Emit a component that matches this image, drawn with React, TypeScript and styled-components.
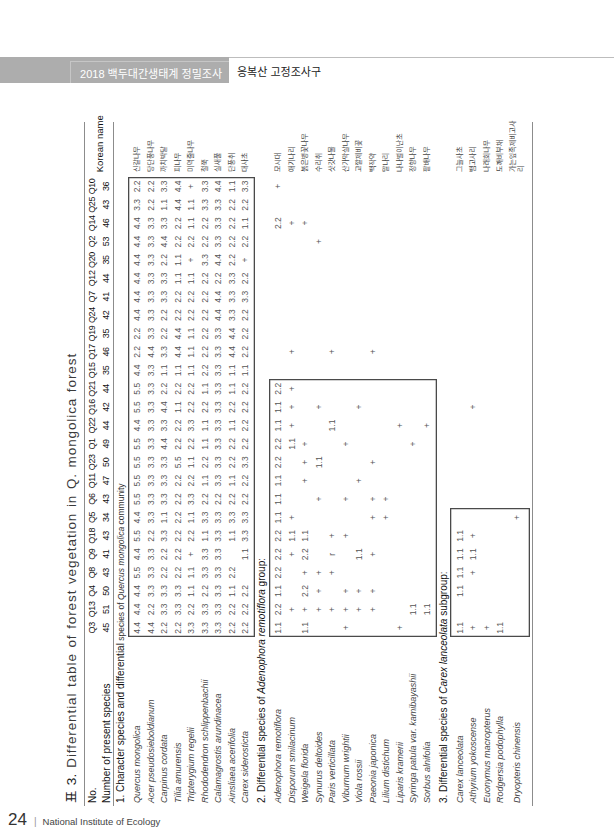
import React from 'react';
import styled, { createGlobalStyle } from 'styled-components';

const Q = ['Q3', 'Q13', 'Q4', 'Q8', 'Q9', 'Q18', 'Q5', 'Q6', 'Q11', 'Q23', 'Q1', 'Q22', 'Q16', 'Q21', 'Q15', 'Q17', 'Q19', 'Q24', 'Q7', 'Q12', 'Q20', 'Q2', 'Q14', 'Q25', 'Q10'];
const COUNTS = [45, 51, 50, 43, 41, 43, 34, 43, 47, 50, 49, 44, 42, 44, 35, 46, 35, 42, 41, 44, 35, 53, 46, 43, 36];

// sizes of the table before it is turned on its side
const NAME_W = 169;
const CELL_W = 18.4;
const KOR_W = 55;
const ROW_H = 13.5;
const TALL_H = 20;
const SHEET_W = NAME_W + CELL_W * 25 + KOR_W;
const SHEET_H = 472;

type Row = { name: string; ko: React.ReactNode; vals: string[]; tall?: boolean };
type Group = { label: React.ReactNode; boxCols: number; rows: Row[] };

const dense = (s: string) => s.split(' ').map((v) => (v === '_' ? '' : v));
const sparse = (m: Record<string, string>) => Q.map((q) => m[q] ?? '');

const GlobalStyle = createGlobalStyle`
  html, body {
    margin: 0;
    background: #ffffff;
  }
  body {
    font-family: "Liberation Sans", "Noto Sans CJK KR", sans-serif;
  }
`;

const Page = styled.div`
  width: 614px;
  height: 840px;
  overflow: hidden;
  display: flex;
  flex-direction: column;
`;

const RunningHead = styled.header`
  display: flex;
  margin-top: 57px;
  height: 26px;
`;

const HeadTab = styled.div`
  width: 229px;
  background: #adadad;
  display: flex;
  justify-content: flex-end;
  align-items: flex-end;
`;

const HeadTabLabel = styled.div`
  height: 21px;
  display: flex;
  align-items: center;
  padding: 0 7px 0 9px;
  border-left: 1px solid #c6c6c6;
  border-top: 1px solid #c6c6c6;
  color: #ffffff;
  font-size: 11px;
  white-space: nowrap;
`;

const HeadTitle = styled.div`
  flex: 1;
  border-top: 1px solid #bdbdbd;
  padding-left: 8px;
  display: flex;
  align-items: center;
  font-size: 11px;
  color: #222;
`;

const Sheet = styled.section`
  flex: none;
  margin: 39px 0 0 60px;
  width: ${SHEET_H}px;
  height: ${SHEET_W}px;
`;

// the printed table lies on its side: turn the whole block a quarter left
const Turned = styled.div`
  width: ${SHEET_W}px;
  height: ${SHEET_H}px;
  transform-origin: 0 0;
  transform: translateY(${SHEET_W}px) rotate(-90deg);
  display: flex;
  flex-direction: column;
`;

const Caption = styled.div`
  height: 24px;
  line-height: 24px;
  padding-left: 3px;
  font-size: 13.5px;
  letter-spacing: 0.9px;
  word-spacing: 1px;
  color: #3a3a3a;
  white-space: nowrap;
`;

const CaptionMark = styled.span`
  color: #222;
  letter-spacing: 0.3px;
`;

const HeadGrid = styled.div`
  display: grid;
  grid-template-columns: ${NAME_W}px repeat(25, ${CELL_W}px) ${KOR_W}px;
  grid-template-rows: 14px 14px;
  align-items: center;
  border-top: 1px solid #8c8c8c;
  border-bottom: 1px solid #8c8c8c;
`;

const HeadLabel = styled.div<{ $row: number }>`
  grid-column: 1;
  grid-row: ${(p) => p.$row};
  padding-left: 3px;
  font-size: 10px;
  color: #111;
  white-space: nowrap;
`;

const ColLabel = styled.div<{ $row: number; $col: number }>`
  grid-column: ${(p) => p.$col};
  grid-row: ${(p) => p.$row};
  text-align: center;
  font-size: 9px;
  letter-spacing: -0.4px;
  color: #111;
  white-space: nowrap;
`;

const KoreanHead = styled.div`
  grid-column: 27;
  grid-row: 1 / span 2;
  padding-left: 5px;
  font-size: 9.5px;
  color: #111;
  white-space: nowrap;
`;

const SectionLabel = styled.div`
  height: ${ROW_H}px;
  line-height: ${ROW_H}px;
  padding-left: 3px;
  font-size: 10px;
  color: #111;
  white-space: nowrap;
`;

const Sub = styled.span`
  font-size: 8.5px;
  color: #333;
`;

const GroupBody = styled.div`
  display: flex;
`;

const NameCol = styled.div`
  flex: none;
  width: ${NAME_W}px;
  padding: 3px 0;
`;

const NameCell = styled.div<{ $tall?: boolean }>`
  height: ${(p) => (p.$tall ? TALL_H : ROW_H)}px;
  display: flex;
  align-items: center;
  padding-left: 3px;
  font-size: 9px;
  font-style: italic;
  color: #444;
  white-space: nowrap;
`;

const Block = styled.div<{ $cols: number; $boxed?: boolean }>`
  flex: none;
  width: ${(p) => p.$cols * CELL_W}px;
  padding: 3px 0;
  box-shadow: ${(p) => (p.$boxed ? 'inset 0 0 0 1.3px #4a4a4a' : 'none')};
`;

const DataRow = styled.div<{ $cols: number; $tall?: boolean }>`
  display: grid;
  grid-template-columns: repeat(${(p) => p.$cols}, ${CELL_W}px);
  height: ${(p) => (p.$tall ? TALL_H : ROW_H)}px;
  align-items: center;
`;

const Cell = styled.span`
  text-align: center;
  font-size: 8.5px;
  color: #555;
  white-space: nowrap;
`;

const KorCol = styled.div`
  flex: none;
  width: ${KOR_W}px;
  padding: 3px 0;
`;

const KorCell = styled.div<{ $tall?: boolean }>`
  height: ${(p) => (p.$tall ? TALL_H : ROW_H)}px;
  display: flex;
  align-items: center;
  padding-left: 5px;
  font-size: 7px;
  line-height: 1.2;
  color: #444;
  white-space: nowrap;
`;

const TableEnd = styled.div`
  margin-top: 2px;
  border-top: 1px solid #8c8c8c;
`;

const Footer = styled.footer`
  display: flex;
  align-items: baseline;
  margin-top: 4px;
  padding-left: 8px;
  color: #333;
`;

const PageNo = styled.span`
  font-size: 17px;
`;

const Bar = styled.span`
  margin: 0 6px 0 7px;
  font-size: 10px;
  color: #999;
`;

const Org = styled.span`
  font-size: 9.5px;
  color: #444;
`;

const groups: Group[] = [
  {
    label: (
      <>
        1. Character species and differential<Sub> species of <i>Quercus mongolica</i> community</Sub>
      </>
    ),
    boxCols: 25,
    rows: [
      { name: 'Quercus mongolica', ko: '신갈나무', vals: dense('4.4 4.4 4.4 5.5 4.4 5.5 4.4 5.5 5.5 5.5 5.5 4.4 5.5 5.5 4.4 2.2 2.2 4.4 4.4 4.4 4.4 4.4 4.4 3.3 2.2') },
      { name: 'Acer pseudosieboldianum', ko: '당단풍나무', vals: dense('4.4 2.2 3.3 3.3 3.3 2.2 3.3 3.3 3.3 3.3 3.3 3.3 3.3 3.3 3.3 4.4 3.3 3.3 3.3 3.3 3.3 3.3 3.3 2.2 2.2') },
      { name: 'Carpinus cordata', ko: '까치박달', vals: dense('2.2 3.3 3.3 2.2 2.2 3.3 1.1 3.3 3.3 3.3 4.4 3.3 4.4 2.2 1.1 3.3 2.2 2.2 3.3 3.3 2.2 4.4 3.3 1.1 3.3') },
      { name: 'Tilia amurensis', ko: '피나무', vals: dense('2.2 3.3 3.3 2.2 2.2 2.2 2.2 2.2 2.2 5.5 2.2 2.2 1.1 2.2 1.1 4.4 4.4 2.2 2.2 1.1 1.1 2.2 2.2 4.4 4.4') },
      { name: 'Tripterygium regelii', ko: '미역줄나무', vals: dense('3.3 2.2 1.1 1.1 + 2.2 1.1 3.3 2.2 1.1 2.2 3.3 2.2 2.2 1.1 1.1 1.1 2.2 2.2 1.1 + 2.2 1.1 1.1 +') },
      { name: 'Rhododendron schlippenbachii', ko: '철쭉', vals: dense('3.3 3.3 2.2 3.3 3.3 1.1 3.3 2.2 1.1 2.2 1.1 1.1 2.2 1.1 2.2 2.2 2.2 2.2 2.2 2.2 3.3 2.2 2.2 3.3 3.3') },
      { name: 'Calamagrostis arundinacea', ko: '실새풀', vals: dense('3.3 3.3 3.3 3.3 3.3 3.3 3.3 2.2 3.3 3.3 3.3 3.3 3.3 3.3 3.3 3.3 3.3 4.4 4.4 2.2 4.4 3.3 3.3 3.3 4.4') },
      { name: 'Ainsliaea acerifolia', ko: '단풍취', vals: dense('2.2 2.2 1.1 2.2 _ 1.1 3.3 2.2 1.1 2.2 2.2 1.1 2.2 1.1 1.1 4.4 4.4 3.3 3.3 3.3 2.2 2.2 2.2 2.2 1.1') },
      { name: 'Carex siderosticta', ko: '대사초', vals: dense('2.2 2.2 2.2 _ 1.1 3.3 3.3 2.2 2.2 3.3 2.2 2.2 2.2 2.2 1.1 2.2 2.2 2.2 3.3 2.2 + 2.2 1.1 2.2 3.3') },
    ],
  },
  {
    label: (
      <>
        2. Differential species of <i>Adenophora remotiflora</i> group:
      </>
    ),
    boxCols: 14,
    rows: [
      { name: 'Adenophora remotiflora', ko: '모시대', vals: sparse({ Q3: '1.1', Q13: '2.2', Q4: '1.1', Q8: '2.2', Q9: '2.2', Q18: '2.2', Q5: '1.1', Q6: '1.1', Q11: '1.1', Q23: '2.2', Q1: '2.2', Q22: '1.1', Q16: '1.1', Q21: '2.2', Q14: '2.2', Q10: '+' }) },
      { name: 'Disporum smilacinum', ko: '애기나리', vals: sparse({ Q13: '+', Q9: '+', Q18: '1.1', Q5: '+', Q1: '1.1', Q22: '+', Q16: '+', Q21: '+', Q17: '+', Q14: '+' }) },
      { name: 'Weigela florida', ko: '붉은병꽃나무', vals: sparse({ Q3: '1.1', Q13: '+', Q4: '2.2', Q8: '+', Q9: '2.2', Q18: '1.1', Q11: '+', Q23: '+', Q1: '+', Q14: '+' }) },
      { name: 'Synurus deltoides', ko: '수리취', vals: sparse({ Q13: '+', Q4: '+', Q8: '+', Q6: '+', Q23: '1.1', Q16: '+', Q2: '+' }) },
      { name: 'Paris verticillata', ko: '삿갓나물', vals: sparse({ Q13: '+', Q8: '+', Q9: 'r', Q18: '+', Q22: '1.1', Q17: '+' }) },
      { name: 'Viburnum wrightii', ko: '산가막살나무', vals: sparse({ Q3: '+', Q13: '+', Q4: '+', Q18: '+', Q6: '+', Q1: '+' }) },
      { name: 'Viola rossii', ko: '고깔제비꽃', vals: sparse({ Q13: '+', Q4: '+', Q9: '1.1', Q11: '+', Q16: '+' }) },
      { name: 'Paeonia japonica', ko: '백작약', vals: sparse({ Q13: '+', Q4: '+', Q9: '+', Q5: '+', Q6: '+', Q23: '+', Q17: '+' }) },
      { name: 'Lilium distichum', ko: '말나리', vals: sparse({ Q5: '+', Q6: '+' }) },
      { name: 'Liparis kramerii', ko: '나나벌이난초', vals: sparse({ Q3: '+', Q22: '+' }) },
      { name: 'Syringa patula var. kamibayashii', ko: '정향나무', vals: sparse({ Q13: '1.1', Q1: '+' }) },
      { name: 'Sorbus alnifolia', ko: '팥배나무', vals: sparse({ Q13: '1.1', Q22: '+' }) },
    ],
  },
  {
    label: (
      <>
        3. Differential species of <i>Carex lanceolata</i> subgroup:
      </>
    ),
    boxCols: 7,
    rows: [
      { name: 'Carex lanceolata', ko: '그늘사초', vals: sparse({ Q3: '1.1', Q4: '1.1', Q8: '1.1', Q9: '1.1', Q18: '1.1' }) },
      { name: 'Athyrium yokoscense', ko: '뱀고사리', vals: sparse({ Q3: '+', Q8: '+', Q9: '1.1', Q18: '+', Q16: '+' }) },
      { name: 'Euonymus macropterus', ko: '나래회나무', vals: sparse({ Q3: '+' }) },
      { name: 'Rodgersia podophylla', ko: '도깨비부채', vals: sparse({ Q3: '1.1' }) },
      {
        name: 'Dryopteris chinensis',
        ko: (
          <>
            가는잎족제비고사
            <br />리
          </>
        ),
        vals: sparse({ Q5: '+' }),
        tall: true,
      },
    ],
  },
];

function GroupSection({ group }: { group: Group }) {
  const { label, boxCols, rows } = group;
  const openCols = 25 - boxCols;
  return (
    <>
      <SectionLabel>{label}</SectionLabel>
      <GroupBody>
        <NameCol>
          {rows.map((r) => (
            <NameCell key={r.name} $tall={r.tall}>
              {r.name}
            </NameCell>
          ))}
        </NameCol>
        <Block $cols={boxCols} $boxed>
          {rows.map((r) => (
            <DataRow key={r.name} $cols={boxCols} $tall={r.tall}>
              {r.vals.slice(0, boxCols).map((v, i) => (
                <Cell key={i}>{v}</Cell>
              ))}
            </DataRow>
          ))}
        </Block>
        {openCols > 0 && (
          <Block $cols={openCols}>
            {rows.map((r) => (
              <DataRow key={r.name} $cols={openCols} $tall={r.tall}>
                {r.vals.slice(boxCols).map((v, i) => (
                  <Cell key={i}>{v}</Cell>
                ))}
              </DataRow>
            ))}
          </Block>
        )}
        <KorCol>
          {rows.map((r) => (
            <KorCell key={r.name} $tall={r.tall}>
              {r.ko}
            </KorCell>
          ))}
        </KorCol>
      </GroupBody>
    </>
  );
}

export default function App() {
  return (
    <Page>
      <GlobalStyle />
      <RunningHead>
        <HeadTab>
          <HeadTabLabel>2018 백두대간생태계 정밀조사</HeadTabLabel>
        </HeadTab>
        <HeadTitle>응복산 고정조사구</HeadTitle>
      </RunningHead>

      <Sheet>
        <Turned>
          <Caption>
            <CaptionMark>표 3.</CaptionMark> Differential table of forest vegetation in Q. mongolica forest
          </Caption>
          <HeadGrid>
            <HeadLabel $row={1}>No.</HeadLabel>
            <HeadLabel $row={2}>Number of present species</HeadLabel>
            {Q.map((q, i) => (
              <ColLabel key={q} $row={1} $col={i + 2}>
                {q}
              </ColLabel>
            ))}
            {COUNTS.map((n, i) => (
              <ColLabel key={i} $row={2} $col={i + 2}>
                {n}
              </ColLabel>
            ))}
            <KoreanHead>Korean name</KoreanHead>
          </HeadGrid>
          {groups.map((g, i) => (
            <GroupSection key={i} group={g} />
          ))}
          <TableEnd />
        </Turned>
      </Sheet>

      <Footer>
        <PageNo>24</PageNo>
        <Bar>|</Bar>
        <Org>National Institute of Ecology</Org>
      </Footer>
    </Page>
  );
}
